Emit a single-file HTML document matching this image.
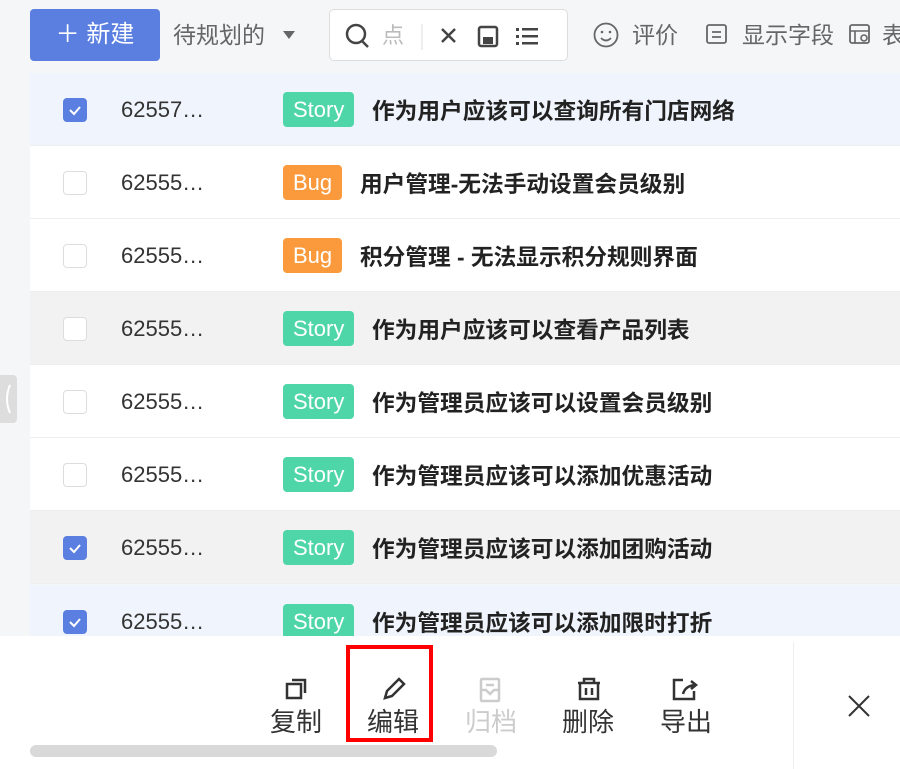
<!DOCTYPE html>
<html><head><meta charset="utf-8"><style>
*{margin:0;padding:0;box-sizing:border-box}
body{width:900px;height:769px;overflow:hidden;background:#f5f6f8;font-family:"Liberation Sans","Noto Sans CJK SC",sans-serif;position:relative;color:#222}
.abs{position:absolute}
.btn{left:30px;top:9px;width:130px;height:52px;background:#5b7fe0;border-radius:4px;color:#fff;font-size:24px;line-height:52px;text-align:center}
.tb{color:#666;font-size:23px;top:20px;line-height:30px}
.search{left:329px;top:9px;width:239px;height:52px;background:#fff;border:1px solid #ddd;border-radius:5px}
.row{position:absolute;left:30px;width:870px;height:73px;border-bottom:1px solid #eee}
.cb{position:absolute;left:33px;top:25px;width:24px;height:24px;border:1.5px solid #ddd;border-radius:4px;background:#fff}
.cb.on{background:#5b7fe0;border-color:#5b7fe0}
.id{position:absolute;left:91px;top:24px;font-size:22px;line-height:26px;color:#333}
.tag{position:absolute;top:19px;height:35px;line-height:35px;border-radius:4px;color:#fff;font-size:22px;padding:0 10px}
.story{left:253px;background:#4fd6a8}
.bug{left:253px;background:#fa9a3c}
.tt{position:absolute;top:22px;font-size:22.7px;line-height:32px;font-weight:bold;color:#222}
.bar{left:0;top:636px;width:900px;height:133px;background:#fff}
.act{position:absolute;top:706px;font-size:26px;line-height:32px;color:#333;width:70px;text-align:center}
</style></head><body>
<div class="abs btn">＋ 新建</div>
<div class="abs tb" style="left:173px">待规划的</div>
<div class="abs" style="left:283px;top:31px;width:0;height:0;border-left:6px solid transparent;border-right:6px solid transparent;border-top:8px solid #666"></div>
<div class="abs search">
<svg width="239" height="52" style="position:absolute;left:0;top:0">
<circle cx="26" cy="24" r="9" fill="none" stroke="#444" stroke-width="2.5"/><line x1="32" y1="31" x2="38" y2="37" stroke="#444" stroke-width="2.5"/>
<text x="52" y="33" font-size="22" fill="#bbb" font-family="Noto Sans CJK SC">点</text>
<line x1="92" y1="14" x2="92" y2="40" stroke="#ddd"/>
<path d="M112 19l13 13M125 19l-13 13" stroke="#444" stroke-width="2.5"/>
<rect x="149" y="17" width="18" height="19" rx="2" fill="none" stroke="#444" stroke-width="2.5"/><rect x="153" y="27" width="10" height="7" fill="#444"/>
<g fill="#444"><rect x="186" y="18" width="3" height="3"/><rect x="192" y="18" width="16" height="2.5"/><rect x="186" y="25" width="3" height="3"/><rect x="192" y="25" width="16" height="2.5"/><rect x="186" y="32" width="3" height="3"/><rect x="192" y="32" width="16" height="2.5"/></g>
</svg></div>
<svg class="abs" style="left:592px;top:20px" width="30" height="30"><circle cx="14" cy="15" r="11.5" fill="none" stroke="#666" stroke-width="1.8"/><circle cx="10" cy="12" r="1.3" fill="#666"/><circle cx="18" cy="12" r="1.3" fill="#666"/><path d="M9 18q5 5 10 0" fill="none" stroke="#666" stroke-width="1.8"/></svg>
<div class="abs tb" style="left:632px">评价</div>
<svg class="abs" style="left:705px;top:23px" width="24" height="24"><rect x="2" y="2" width="19" height="18" rx="2" fill="none" stroke="#666" stroke-width="1.8"/><path d="M7 9h9M7 14h9" stroke="#666" stroke-width="1.8"/></svg>
<div class="abs tb" style="left:742px">显示字段</div>
<svg class="abs" style="left:848px;top:23px" width="24" height="24"><rect x="2" y="2" width="19" height="18" rx="2" fill="none" stroke="#666" stroke-width="1.8"/><path d="M2 8h19M7 8v12" stroke="#666" stroke-width="1.6"/><circle cx="16" cy="15" r="3" fill="none" stroke="#666" stroke-width="1.6"/></svg>
<div class="abs tb" style="left:882px">表</div>

<div class="row" style="top:73px;background:#f0f4fc"><div class="cb on"></div><div class="id">62557…</div><div class="tag story">Story</div><div class="tt" style="left:342px">作为用户应该可以查询所有门店网络</div></div>
<div class="row" style="top:146px;background:#fff"><div class="cb"></div><div class="id">62555…</div><div class="tag bug">Bug</div><div class="tt" style="left:330px">用户管理-无法手动设置会员级别</div></div>
<div class="row" style="top:219px;background:#fff"><div class="cb"></div><div class="id">62555…</div><div class="tag bug">Bug</div><div class="tt" style="left:330px">积分管理 - 无法显示积分规则界面</div></div>
<div class="row" style="top:292px;background:#f2f2f2"><div class="cb"></div><div class="id">62555…</div><div class="tag story">Story</div><div class="tt" style="left:342px">作为用户应该可以查看产品列表</div></div>
<div class="row" style="top:365px;background:#fff"><div class="cb"></div><div class="id">62555…</div><div class="tag story">Story</div><div class="tt" style="left:342px">作为管理员应该可以设置会员级别</div></div>
<div class="row" style="top:438px;background:#fff"><div class="cb"></div><div class="id">62555…</div><div class="tag story">Story</div><div class="tt" style="left:342px">作为管理员应该可以添加优惠活动</div></div>
<div class="row" style="top:511px;background:#f2f2f2"><div class="cb on"></div><div class="id">62555…</div><div class="tag story">Story</div><div class="tt" style="left:342px">作为管理员应该可以添加团购活动</div></div>
<div class="row" style="top:585px;background:#f0f4fc"><div class="cb on"></div><div class="id">62555…</div><div class="tag story">Story</div><div class="tt" style="left:342px">作为管理员应该可以添加限时打折</div></div>
<svg class="abs" style="left:62px;top:95px" width="600" height="560"><g fill="none" stroke="#fff" stroke-width="2"><path d="M8 15l4 4 6-7"/><path d="M8 453l4 4 6-7"/><path d="M8 527l4 4 6-7"/></g></svg>
<div class="abs" style="left:0;top:375px;width:17px;height:48px;background:#ddd;border-radius:0 4px 4px 0"></div>
<svg class="abs" style="left:0;top:375px" width="17" height="48"><path d="M10 10q-6 14 0 28" fill="none" stroke="#fff" stroke-width="2"/></svg>

<div class="abs bar"></div>
<div class="abs" style="left:793px;top:642px;width:1px;height:127px;background:#eee"></div>
<svg class="abs" style="left:0;top:636px" width="900" height="133">
<g fill="none" stroke="#333" stroke-width="2.5">
<rect x="287" y="48" width="14" height="14"/><path d="M292 44h13v13"/>
<path d="M385 62l2-7 12-12 5 5-12 12z"/>
<path d="M578 47h22M584 47v-4h10v4M580 47v16h18v-16M586 52v7M592 52v7"/>
<path d="M683 44h-9v19h20v-8M683 58q2-8 12-9M691 45l5 4-5 4"/>
<path d="M849 60l20 20M869 60l-20 20" stroke-width="2"/>
</g>
<g fill="none" stroke="#ccc" stroke-width="2.5"><rect x="481" y="43" width="18" height="22" rx="1"/><path d="M481 54h5l4 4 4-4h5M486 49h8"/></g>
</svg>
<div class="act" style="left:261px">复制</div>
<div class="act" style="left:358px">编辑</div>
<div class="act" style="left:456px;color:#ccc">归档</div>
<div class="act" style="left:553px">删除</div>
<div class="act" style="left:651px">导出</div>
<div class="abs" style="left:346px;top:645px;width:87px;height:97px;border:4px solid #f00"></div>
<div class="abs" style="left:30px;top:745px;width:467px;height:12px;background:#d9d9d9;border-radius:6px"></div>
</body></html>
